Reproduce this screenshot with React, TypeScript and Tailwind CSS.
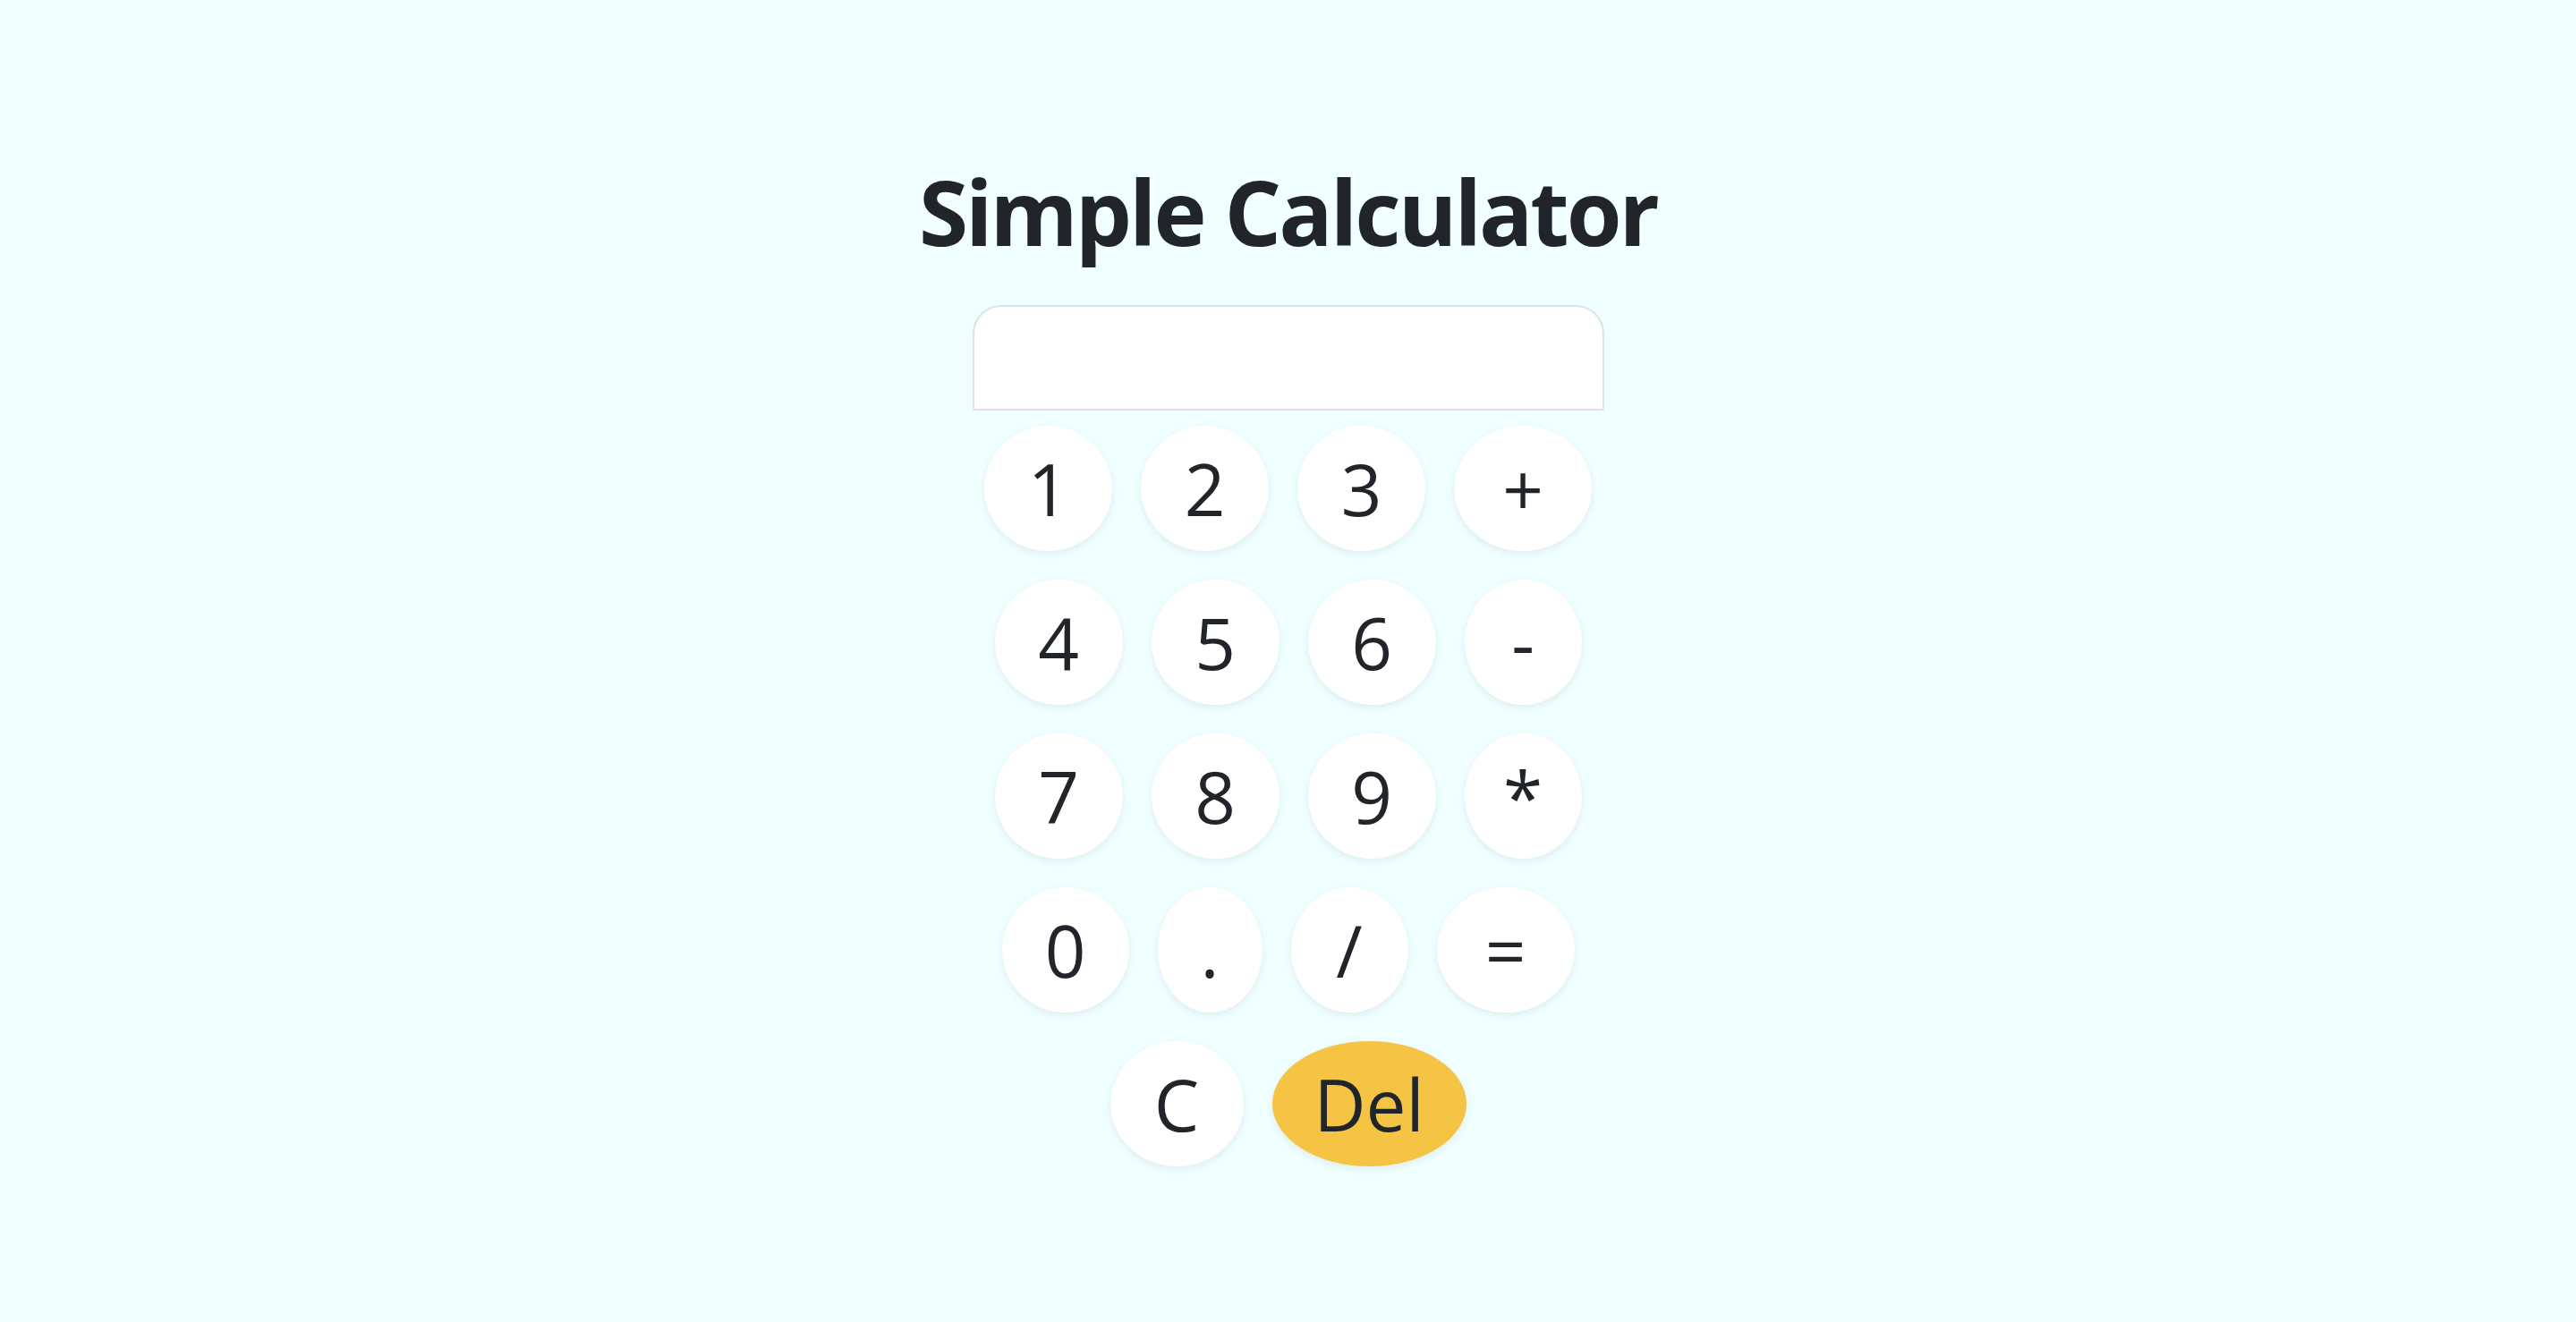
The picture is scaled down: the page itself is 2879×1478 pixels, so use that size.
import React, { useState } from "react";

type Key = { label: string; w: string; extra?: string };

const rows: Key[][] = [
  [
    { label: "1", w: "w-[143px]" },
    { label: "2", w: "w-[143px]" },
    { label: "3", w: "w-[143px]" },
    { label: "+", w: "w-[154px]" },
  ],
  [
    { label: "4", w: "w-[143px]" },
    { label: "5", w: "w-[143px]" },
    { label: "6", w: "w-[143px]" },
    { label: "-", w: "w-[131px]" },
  ],
  [
    { label: "7", w: "w-[143px]" },
    { label: "8", w: "w-[143px]" },
    { label: "9", w: "w-[143px]" },
    { label: "*", w: "w-[131px]" },
  ],
  [
    { label: "0", w: "w-[142px]" },
    { label: ".", w: "w-[117px]" },
    { label: "/", w: "w-[131px]" },
    { label: "=", w: "w-[154px]" },
  ],
  [
    { label: "C", w: "w-[149px]" },
    { label: "Del", w: "w-[217px]", extra: "bg-[#f6c445]" },
  ],
];

export default function App() {
  const [value, setValue] = useState("");

  const press = (k: string) => {
    if (k === "C") setValue("");
    else if (k === "Del") setValue((v) => v.slice(0, -1));
    else if (k === "=") {
      try {
        // eslint-disable-next-line no-new-func
        const r = Function(`"use strict";return (${value || "0"})`)();
        setValue(String(r));
      } catch {
        setValue("Error");
      }
    } else setValue((v) => v + k);
  };

  return (
    <div
      className="min-h-screen w-full bg-[#f0ffff] text-[#212529] flex flex-col items-center"
      style={{ fontFamily: '"Open Sans", "Noto Sans", sans-serif' }}
    >
      <h1 className="mt-[176px] text-[100px] leading-[120px] font-bold tracking-[-3px]">
        Simple Calculator
      </h1>
      <input
        value={value}
        readOnly
        className="mt-[45px] w-[706px] h-[118px] bg-white border-2 border-[#dee2e6] rounded-t-[32px] outline-none px-6 text-[60px] text-right"
      />
      <div className="mt-[17px] flex flex-col items-center gap-[32px]">
        {rows.map((row, i) => (
          <div key={i} className="flex gap-[32px] justify-center">
            {row.map((k) => (
              <button
                key={k.label}
                onClick={() => press(k.label)}
                className={`${k.w} h-[140px] rounded-[50%] ${k.extra ?? "bg-white"} text-[80px] leading-[140px] text-center text-[#212529] shadow-[0_3px_8px_rgba(0,40,40,0.08)]`}
              >
                {k.label}
              </button>
            ))}
          </div>
        ))}
      </div>
    </div>
  );
}
